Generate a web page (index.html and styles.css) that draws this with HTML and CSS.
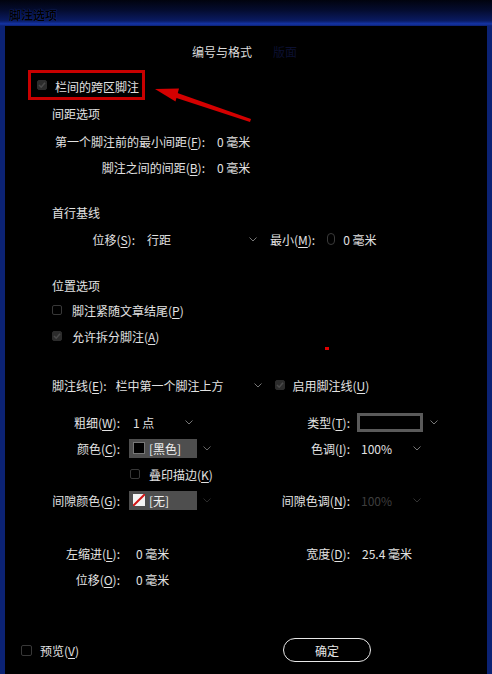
FILE: index.html
```html
<!DOCTYPE html>
<html lang="zh-CN">
<head>
<meta charset="utf-8">
<title>脚注选项</title>
<link rel="stylesheet" href="styles.css">
</head>
<body>
<div class="dialog">
  <div class="titlebar"><span class="title">脚注选项</span></div>
  <div class="body">
    <div class="content">
      <div class="tabs"><span class="tab">编号与格式</span><span class="tab dim">版面</span></div>

      <div class="highlight">
        <span class="cb checked"><svg viewBox="0 0 10 10" width="10" height="10"><polyline points="2,5 4.2,7.2 8,2.8" fill="none" stroke="#4a4a4a" stroke-width="1.6"/></svg></span>
        <span class="txt">栏间的跨区脚注</span>
      </div>

      <div class="row heading">间距选项</div>
      <div class="row spacing mt2"><span class="lbl lw153">第一个脚注前的最小间距(<u>F</u>):</span><span class="val">0 毫米</span></div>
      <div class="row spacing"><span class="lbl lw153">脚注之间的间距(<u>B</u>):</span><span class="val">0 毫米</span></div>

      <div class="row heading mt19">首行基线</div>
      <div class="row baseline mt1">
        <span class="lbl lw83">位移(<u>S</u>):</span>
        <span class="select s-offset"><span>行距</span><svg class="chev" viewBox="0 0 8 5" width="8" height="5"><polyline points="0.5,0.5 4,4 7.5,0.5" fill="none" stroke="#777" stroke-width="1"/></svg></span>
        <span class="lbl min">最小(<u>M</u>):</span>
        <span class="spin"></span>
        <span class="val">0 毫米</span>
      </div>

      <div class="row heading mt20">位置选项</div>
      <div class="row check mtn1"><span class="cb"></span><span class="txt">脚注紧随文章结尾(<u>P</u>)</span></div>
      <div class="row check">
        <span class="cb checked"><svg viewBox="0 0 10 10" width="10" height="10"><polyline points="2,5 4.2,7.2 8,2.8" fill="none" stroke="#4a4a4a" stroke-width="1.6"/></svg></span>
        <span class="txt">允许拆分脚注(<u>A</u>)</span>
      </div>

      <div class="row ruleline mt23">
        <span class="lbl">脚注线(<u>E</u>):</span>
        <span class="select s-rule"><span>栏中第一个脚注上方</span><svg class="chev" viewBox="0 0 8 5" width="8" height="5"><polyline points="0.5,0.5 4,4 7.5,0.5" fill="none" stroke="#777" stroke-width="1"/></svg></span>
        <span class="cb checked"><svg viewBox="0 0 10 10" width="10" height="10"><polyline points="2,5 4.2,7.2 8,2.8" fill="none" stroke="#4a4a4a" stroke-width="1.6"/></svg></span>
        <span class="txt">启用脚注线(<u>U</u>)</span>
      </div>

      <div class="grid mt11">
        <span class="lbl">粗细(<u>W</u>):</span>
        <span class="c2"><span class="select s-weight"><span>1 点</span><svg class="chev" viewBox="0 0 8 5" width="8" height="5"><polyline points="0.5,0.5 4,4 7.5,0.5" fill="none" stroke="#777" stroke-width="1"/></svg></span></span>
        <span class="lbl">类型(<u>T</u>):</span>
        <span class="c4"><span class="typebox"></span><svg class="chev" viewBox="0 0 8 5" width="8" height="5"><polyline points="0.5,0.5 4,4 7.5,0.5" fill="none" stroke="#777" stroke-width="1"/></svg></span>

        <span class="lbl">颜色(<u>C</u>):</span>
        <span class="c2"><span class="swatch"><span class="chip black"></span><span class="sw-text">[黑色]</span></span><svg class="chev" viewBox="0 0 8 5" width="8" height="5"><polyline points="0.5,0.5 4,4 7.5,0.5" fill="none" stroke="#666" stroke-width="1"/></svg></span>
        <span class="lbl">色调(<u>I</u>):</span>
        <span class="c4"><span class="select s-tint"><span>100%</span><svg class="chev" viewBox="0 0 8 5" width="8" height="5"><polyline points="0.5,0.5 4,4 7.5,0.5" fill="none" stroke="#777" stroke-width="1"/></svg></span></span>

        <span></span>
        <span class="c2 checkcell"><span class="cb"></span><span class="txt">叠印描边(<u>K</u>)</span></span>
        <span></span>
        <span></span>

        <span class="lbl">间隙颜色(<u>G</u>):</span>
        <span class="c2"><span class="swatch"><span class="chip none"><svg viewBox="0 0 12 12" width="12" height="12"><rect width="12" height="12" fill="#f4f4f4"/><line x1="0" y1="12" x2="12" y2="0" stroke="#d01818" stroke-width="2"/></svg></span><span class="sw-text">[无]</span></span><svg class="chev" viewBox="0 0 8 5" width="8" height="5"><polyline points="0.5,0.5 4,4 7.5,0.5" fill="none" stroke="#2a2a2a" stroke-width="1"/></svg></span>
        <span class="lbl">间隙色调(<u>N</u>):</span>
        <span class="c4"><span class="select s-tint disabled"><span>100%</span><svg class="chev" viewBox="0 0 8 5" width="8" height="5"><polyline points="0.5,0.5 4,4 7.5,0.5" fill="none" stroke="#333" stroke-width="1"/></svg></span></span>
      </div>

      <div class="grid mt27">
        <span class="lbl">左缩进(<u>L</u>):</span>
        <span class="c2 num">0 毫米</span>
        <span class="lbl">宽度(<u>D</u>):</span>
        <span class="c4 num">25.4 毫米</span>

        <span class="lbl">位移(<u>O</u>):</span>
        <span class="c2 num">0 毫米</span>
        <span></span>
        <span></span>
      </div>
    </div>

    <div class="footer">
      <span class="cb"></span><span class="txt">预览(<u>V</u>)</span>
      <span class="button">确定</span>
    </div>
  </div>

  <svg class="arrow" width="492" height="674" viewBox="0 0 492 674">
    <polygon points="155,89 179,88.5 175.5,101.5" fill="#d40000"/>
    <polygon points="176,92.5 251,119 250,122 175,97.5" fill="#d40000"/>
  </svg>
  <span class="dot"></span>
</div>
</body>
</html>
```

FILE: styles.css
```css
* { box-sizing: border-box; }

html, body {
  margin: 0;
  padding: 0;
  background: #000;
}

body {
  font-family: "Noto Sans CJK SC", "Noto Sans", sans-serif;
  font-size: 12px;
  color: #e2e2e2;
}

u { text-decoration: underline; text-underline-offset: 2px; }

.dialog {
  position: relative;
  width: 492px;
  height: 674px;
  display: flex;
  flex-direction: column;
  background: #000;
  overflow: hidden;
}

.titlebar {
  height: 26px;
  flex: none;
  display: flex;
  align-items: center;
  padding-left: 9px;
  background: linear-gradient(to bottom, #01030e 0%, #040c30 40%, #0a1b62 80%, #1434a6 92%, #0c2070 100%);
}

.title {
  font-weight: bold;
  font-size: 12px;
  color: #000;
  text-shadow: 0 0 1px #2040b0;
  padding-top: 3px;
}

.body {
  flex: 1;
  display: flex;
  flex-direction: column;
  border-left: 5px solid #0b2274;
  border-right: 5px solid #0b2274;
  background: #000;
  padding-bottom: 12px;
}

.content {
  padding-left: 47px;
  padding-top: 14px;
  display: flex;
  flex-direction: column;
}

.tabs {
  height: 24px;
  line-height: 24px;
  display: flex;
  padding-left: 140px;
  gap: 21px;
}
.tab { color: #dcdcdc; }
.tab.dim { color: #0c1030; }

.highlight {
  margin-top: 6px;
  margin-left: -24px;
  width: 117px;
  height: 30px;
  border: 3px solid #c80000;
  display: flex;
  align-items: center;
  padding-left: 6px;
  gap: 8px;
}
.highlight .txt { padding-top: 2px; }

.row {
  height: 26px;
  display: flex;
  align-items: center;
}

.mt1 { margin-top: 1px; }
.mt2 { margin-top: 2px; }
.mt11 { margin-top: 11px; }
.mt19 { margin-top: 19px; }
.mt20 { margin-top: 20px; }
.mt23 { margin-top: 23px; }
.mt27 { margin-top: 27px; }
.mtn1 { margin-top: -1px; }

.lbl { text-align: right; white-space: nowrap; }
.lw153 { width: 153px; }
.lw83 { width: 83px; }

.spacing .val { margin-left: 12px; }
.val { white-space: nowrap; }

.cb {
  flex: none;
  display: inline-flex;
  width: 10px;
  height: 10px;
  border: 1px solid #383838;
  border-radius: 2px;
  background: #000;
}
.cb.checked {
  background: #2c2c2c;
  border-color: #2c2c2c;
}
.cb svg { display: block; margin: -1px; }

.check { gap: 10px; }

.select {
  display: inline-flex;
  align-items: center;
  justify-content: space-between;
  white-space: nowrap;
}
.chev { display: block; flex: none; }

.baseline .s-offset { width: 110px; margin-left: 12px; }
.baseline .min { margin-left: 13px; }
.spin {
  width: 8px;
  height: 12px;
  border: 1px solid #3a3a3a;
  border-radius: 4px;
  margin-left: 12px;
}
.baseline .val { margin-left: 8px; }

.ruleline .s-rule { width: 146px; margin-left: 9px; }
.ruleline .cb { margin-left: 13px; }
.ruleline .txt { margin-left: 8px; }

.grid {
  display: grid;
  grid-template-columns: 68px 150px 80px 1fr;
  grid-auto-rows: 26px;
  align-items: center;
}

.c2 {
  padding-left: 9px;
  display: flex;
  align-items: center;
}
.c4 {
  padding-left: 7px;
  display: flex;
  align-items: center;
}

.s-weight { width: 64px; padding-left: 4px; }
.s-tint { width: 64px; padding-left: 4px; }
.s-tint.disabled { color: #3e3e3e; }

.typebox {
  width: 66px;
  height: 19px;
  border: 3px solid #5a5a5a;
  background: #000;
}
.c4 .typebox + .chev { margin-left: 7px; }

.swatch {
  width: 68px;
  height: 19px;
  background: #4e4e4e;
  display: inline-flex;
  align-items: center;
  padding-left: 4px;
  gap: 4px;
}
.swatch + .chev { margin-left: 6px; }
.chip {
  width: 12px;
  height: 12px;
  flex: none;
}
.chip.black { background: #000; border: 1px solid #777; }
.chip svg { display: block; }
.sw-text { color: #f0f0f0; }

.checkcell { gap: 9px; padding-left: 10px; }

.num { padding-left: 16px; white-space: nowrap; }
.c4.num { padding-left: 12px; }

.footer {
  margin-top: auto;
  height: 24px;
  display: flex;
  align-items: center;
  padding-left: 16px;
  padding-right: 116px;
}
.footer .cb { width: 11px; height: 11px; }
.footer .txt { margin-left: 8px; }

.button {
  margin-left: auto;
  width: 88px;
  height: 24px;
  border: 1.5px solid #e8e8e8;
  border-radius: 12px;
  display: flex;
  align-items: center;
  justify-content: center;
  color: #e6e6e6;
}

.arrow {
  position: absolute;
  left: 0;
  top: 0;
  pointer-events: none;
}

.dot {
  position: absolute;
  left: 325px;
  top: 347px;
  width: 4px;
  height: 3px;
  background: #e00000;
}
```
